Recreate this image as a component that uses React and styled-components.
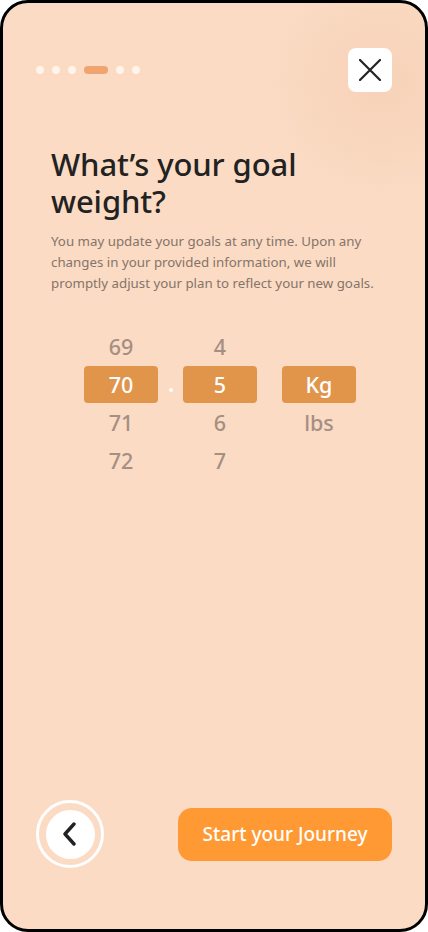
import React from "react";
import styled, { createGlobalStyle } from "styled-components";

const Global = createGlobalStyle`
  html, body { margin: 0; padding: 0; background: #ffffff; }
  body { font-family: "Noto Sans", "Open Sans", sans-serif; }
  * { box-sizing: border-box; }
`;

const Frame = styled.div`
  width: 428px;
  height: 932px;
  border: 3px solid #000;
  border-radius: 28px;
  overflow: hidden;
  display: flex;
  flex-direction: column;
  background:
    radial-gradient(circle at 378px 80px, rgba(236, 192, 160, 0.35) 0, rgba(236, 192, 160, 0) 115px),
    #fbdbc4;
`;

const Header = styled.div`
  display: flex;
  align-items: center;
  justify-content: space-between;
  padding: 45px 33px 0 33px;
`;

const Dots = styled.div`
  display: flex;
  align-items: center;
  gap: 8px;
`;

const Dot = styled.span`
  display: block;
  height: 8px;
  width: ${(p) => (p.$active ? "24px" : "8px")};
  border-radius: 4px;
  background: ${(p) => (p.$active ? "#f0a46e" : "#fff4ec")};
`;

const CloseButton = styled.button`
  width: 44px;
  height: 44px;
  border: none;
  border-radius: 8px;
  background: #ffffff;
  display: flex;
  align-items: center;
  justify-content: center;
  padding: 0;
  cursor: pointer;
`;

const Content = styled.div`
  padding: 54px 33px 0 48px;
`;

const Title = styled.h1`
  margin: 0;
  font-size: 31px;
  line-height: 37px;
  font-weight: 500;
  color: #222222;
  letter-spacing: -0.1px;
`;

const Description = styled.p`
  margin: 11px 0 0 0;
  font-size: 13.3px;
  line-height: 21px;
  color: #857469;
  max-width: 325px;
`;

const Picker = styled.div`
  display: grid;
  grid-template-columns: 74px 25px 74px 25px 74px;
  grid-auto-rows: 38px;
  margin: 33px 0 0 81px;
`;

const Cell = styled.div`
  display: flex;
  align-items: center;
  justify-content: center;
  grid-column: ${(p) => p.$col};
  grid-row: ${(p) => p.$row};
`;

const Value = styled.span`
  font-size: 21.5px;
  font-weight: 500;
  color: #a58f83;
`;

const Selected = styled.div`
  width: 74px;
  height: 37px;
  border-radius: 4px;
  background: #e0954b;
  color: #ffffff;
  font-size: 21.5px;
  font-weight: 500;
  display: flex;
  align-items: center;
  justify-content: center;
`;

const Separator = styled.span`
  width: 4px;
  height: 4px;
  border-radius: 50%;
  background: #ffffff;
  margin-top: 12px;
`;

const Footer = styled.div`
  margin-top: auto;
  display: flex;
  align-items: center;
  justify-content: space-between;
  padding: 0 33px 61px 33px;
`;

const BackRing = styled.button`
  width: 68px;
  height: 68px;
  border-radius: 50%;
  border: 3px solid #ffffff;
  background: transparent;
  padding: 0;
  display: flex;
  align-items: center;
  justify-content: center;
  cursor: pointer;
`;

const BackInner = styled.span`
  width: 49px;
  height: 49px;
  border-radius: 50%;
  background: #ffffff;
  display: flex;
  align-items: center;
  justify-content: center;
`;

const Cta = styled.button`
  width: 214px;
  height: 53px;
  border: none;
  border-radius: 14px;
  background: #ff9933;
  color: #ffffff;
  font-family: "Noto Sans", "Open Sans", sans-serif;
  font-size: 19px;
  font-weight: 500;
  cursor: pointer;
`;

const whole = [
  { v: "69", row: 1 },
  { v: "70", row: 2, sel: true },
  { v: "71", row: 3 },
  { v: "72", row: 4 },
];
const decimal = [
  { v: "4", row: 1 },
  { v: "5", row: 2, sel: true },
  { v: "6", row: 3 },
  { v: "7", row: 4 },
];
const units = [
  { v: "Kg", row: 2, sel: true },
  { v: "lbs", row: 3 },
];

function Column({ items, col }) {
  return items.map((it) => (
    <Cell key={it.v} $col={col} $row={it.row}>
      {it.sel ? <Selected>{it.v}</Selected> : <Value>{it.v}</Value>}
    </Cell>
  ));
}

export default function App() {
  return (
    <>
      <Global />
      <Frame>
        <Header>
          <Dots>
            <Dot />
            <Dot />
            <Dot />
            <Dot $active />
            <Dot />
            <Dot />
          </Dots>
          <CloseButton aria-label="Close">
            <svg width="22" height="22" viewBox="0 0 22 22" fill="none">
              <path d="M1 1L21 21M21 1L1 21" stroke="#222" strokeWidth="2.2" strokeLinecap="round" />
            </svg>
          </CloseButton>
        </Header>
        <Content>
          <Title>
            What’s your goal
            <br />
            weight?
          </Title>
          <Description>
            You may update your goals at any time. Upon any changes in your provided information, we will promptly adjust your plan to reflect your new goals.
          </Description>
        </Content>
        <Picker>
          <Column items={whole} col={1} />
          <Cell $col={2} $row={2}>
            <Separator />
          </Cell>
          <Column items={decimal} col={3} />
          <Column items={units} col={5} />
        </Picker>
        <Footer>
          <BackRing aria-label="Back">
            <BackInner>
              <svg width="16" height="24" viewBox="0 0 16 24" fill="none">
                <path d="M12 2L3 12L12 22" stroke="#222" strokeWidth="3.4" strokeLinecap="round" strokeLinejoin="round" />
              </svg>
            </BackInner>
          </BackRing>
          <Cta>Start your Journey</Cta>
        </Footer>
      </Frame>
    </>
  );
}
